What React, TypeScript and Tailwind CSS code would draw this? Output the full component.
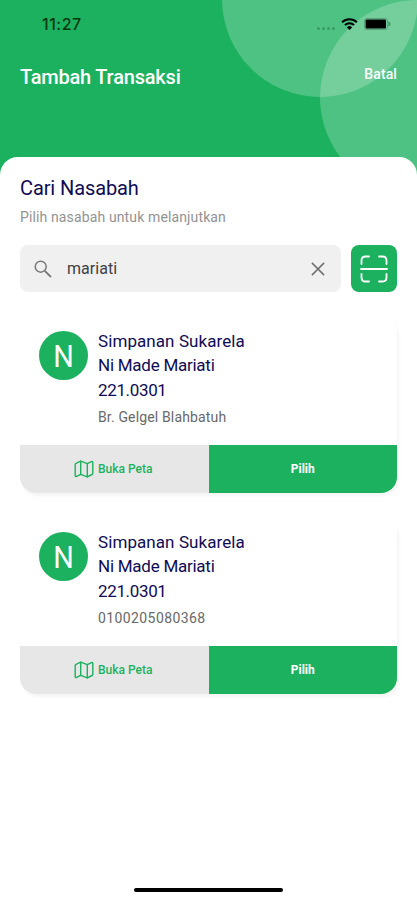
import React from 'react';

interface Customer {
  id: number;
  product: string;
  name: string;
  account: string;
  detail: string;
  detailClass: string;
}

const customers: Customer[] = [
  {
    id: 1,
    product: 'Simpanan Sukarela',
    name: 'Ni Made Mariati',
    account: '221.0301',
    detail: 'Br. Gelgel Blahbatuh',
    detailClass: 'tracking-[0.15px]',
  },
  {
    id: 2,
    product: 'Simpanan Sukarela',
    name: 'Ni Made Mariati',
    account: '221.0301',
    detail: '0100205080368',
    detailClass: 'tracking-[0.4px]',
  },
];

const MapIcon = () => (
  <svg width="20" height="18" viewBox="0 0 20 18" fill="none" stroke="currentColor" strokeWidth="1.4" strokeLinejoin="round" strokeLinecap="round">
    <path d="M1.2 4.6Q1.2 3.7 2 3.3L6.7 1.2L13.3 3.6L17.4 1.6Q18.8 1 18.8 2.4V13.2Q18.8 14.1 18 14.5L13.3 16.9L6.7 14.4L2.6 16.3Q1.2 16.9 1.2 15.5Z" />
    <path d="M6.7 1.2V14.4M13.3 3.6V16.9" />
  </svg>
);

const StatusBar = () => (
  <div className="flex h-[48px] items-center justify-between pl-[42px] pr-[26px] text-black">
    <span className="font-['Inter',sans-serif] text-[16px] font-medium leading-5 tracking-[0.5px] text-[#07370f]">11:27</span>
    <div className="flex items-center">
      <div className="mt-2 flex gap-[2px]">
        {[0, 1, 2, 3].map(dot => (
          <span key={dot} className="h-[3px] w-[3px] rounded-full bg-[#3a9a63]"></span>
        ))}
      </div>
      <svg className="ml-[6px]" width="17" height="12" viewBox="0 0 17 12" fill="none" stroke="currentColor" strokeWidth="2">
        <path d="M1.1 4.2A10.6 10.6 0 0 1 15.9 4.2" />
        <path d="M3.9 7.1A6.6 6.6 0 0 1 13.1 7.1" />
        <path d="M8.5 12L5.9 9.4A3.7 3.7 0 0 1 11.1 9.4Z" fill="currentColor" stroke="none" />
      </svg>
      <svg className="ml-[6px]" width="27" height="12" viewBox="0 0 27 12">
        <rect x="0.5" y="0.5" width="23" height="11" rx="2" fill="none" stroke="#55a377" />
        <rect x="1.6" y="1.6" width="20.4" height="8.8" rx="1" fill="currentColor" />
        <path d="M24.5 3.6Q26.5 4.4 26.5 6T24.5 8.4Z" fill="#3f8d60" />
      </svg>
    </div>
  </div>
);

const CustomerCard: React.FC<{ customer: Customer }> = ({ customer }) => (
  <article className="h-[176px] overflow-hidden rounded-[16px] bg-white shadow-[2px_3px_3px_rgba(0,0,0,0.045)]">
    <div className="flex h-[128px] gap-[10px] pl-[19px] pt-[12px]">
      <div className="mt-[2px] flex h-[49px] w-[49px] shrink-0 items-center justify-center rounded-full bg-[#1cb15f] text-white">
        <span className="scale-x-90 text-[32px] leading-none">N</span>
      </div>
      <div className="whitespace-nowrap text-[17px] leading-[24.3px] text-[#100b54]">
        <p className="tracking-[0.08px]">{customer.product}</p>
        <p className="tracking-[-0.25px]">{customer.name}</p>
        <p className="tracking-[-0.35px]">{customer.account}</p>
        <p className={`mt-[4px] text-[14px] leading-[22px] text-[#686868] ${customer.detailClass}`}>{customer.detail}</p>
      </div>
    </div>
    <div className="grid h-[48px] grid-cols-2 text-[12px]">
      <button className="flex items-center justify-center gap-[4px] bg-[#e7e7e7] pr-[2px] font-medium text-[#1cb15f]">
        <MapIcon />
        <span>Buka Peta</span>
      </button>
      <button className="bg-[#1cb15f] font-bold text-white">Pilih</button>
    </div>
  </article>
);

const App: React.FC = () => {
  return (
    <div className="flex h-[900px] w-[417px] flex-col overflow-hidden bg-[#1cb15f] font-['Roboto',sans-serif]">
      <header className="relative h-[157px] shrink-0">
        <svg className="absolute left-0 top-0" width="417" height="180" viewBox="0 0 417 180" fill="white" fillOpacity="0.22">
          <circle cx="320" cy="-1" r="98" />
          <circle cx="417.5" cy="97.5" r="97.5" />
        </svg>
        <div className="relative">
          <StatusBar />
          <div className="flex h-[58px] items-center justify-between px-5 text-white">
            <h1 className="text-[20px] font-medium tracking-[-0.2px]">Tambah Transaksi</h1>
            <button className="mb-[6px] text-[14px] font-medium tracking-[0.1px]">Batal</button>
          </div>
        </div>
      </header>

      <main className="relative flex grow flex-col rounded-t-[18px] bg-white px-5 pt-[19px]">
        <h2 className="text-[20px] leading-[25px] tracking-[-0.1px] text-[#100b54]">Cari Nasabah</h2>
        <p className="mt-[7px] text-[14px] leading-[18px] tracking-[0.13px] text-[#929292]">Pilih nasabah untuk melanjutkan</p>

        <div className="mt-[19px] flex gap-[10px]">
          <div className="flex h-[47px] grow items-center rounded-[8px] bg-[#f0f0f0] pl-[14px] pr-[16px]">
            <svg width="18" height="18" viewBox="0 0 18 18" fill="none" stroke="#777" strokeWidth="1.5">
              <circle cx="6.7" cy="6.7" r="5.5" />
              <path d="M10.8 10.8L17 17" strokeWidth="1.8" />
            </svg>
            <input
              className="ml-[15px] w-0 grow bg-transparent text-[16px] leading-5 tracking-[0.05px] text-[#414141] outline-none"
              defaultValue="mariati"
            />
            <svg width="14" height="14" viewBox="0 0 14 14" fill="none" stroke="#707070" strokeWidth="1.5">
              <path d="M0.9 0.9L13.1 13.1M13.1 0.9L0.9 13.1" />
            </svg>
          </div>
          <button className="flex h-[47px] w-[46px] shrink-0 items-center justify-center rounded-[8px] bg-[#1cb15f] text-white">
            <svg width="28" height="28" viewBox="0 0 28 28" fill="none" stroke="currentColor" strokeWidth="1.8" strokeLinecap="round">
              <path d="M1.5 9V5.5Q1.5 1.5 5.5 1.5H9M19 1.5H22.5Q26.5 1.5 26.5 5.5V9M26.5 19V22.5Q26.5 26.5 22.5 26.5H19M9 26.5H5.5Q1.5 26.5 1.5 22.5V19M1 14H27" />
            </svg>
          </button>
        </div>

        <div className="mt-[25px] flex flex-col gap-[25px]">
          {customers.map(customer => (
            <CustomerCard key={customer.id} customer={customer} />
          ))}
        </div>

        <div className="mx-auto mb-[8px] mt-auto h-[4px] w-[149px] rounded-full bg-black"></div>
      </main>
    </div>
  );
};

export default App;
